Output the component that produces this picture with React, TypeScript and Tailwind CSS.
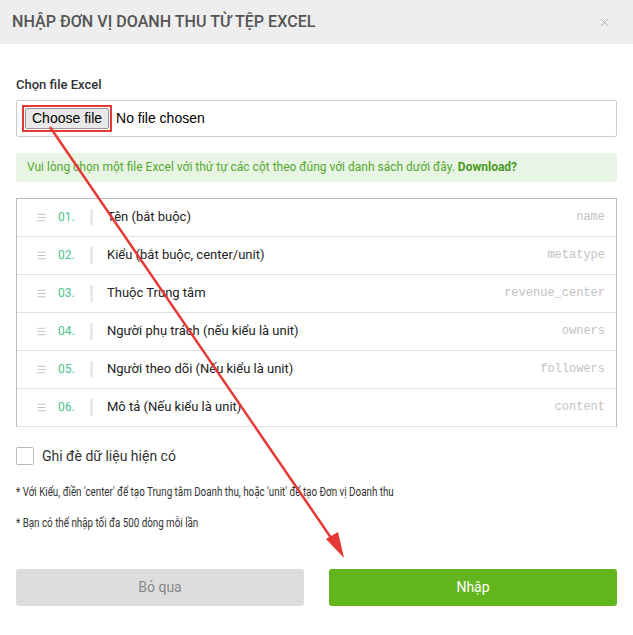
import { Menu, X } from 'lucide-react';

const rows = [
  { no: '01.', label: 'Tên (bắt buộc)', key: 'name' },
  { no: '02.', label: 'Kiểu (bắt buộc, center/unit)', key: 'metatype' },
  { no: '03.', label: 'Thuộc Trung tâm', key: 'revenue_center' },
  { no: '04.', label: 'Người phụ trách (nếu kiểu là unit)', key: 'owners' },
  { no: '05.', label: 'Người theo dõi (Nếu kiểu là unit)', key: 'followers' },
  { no: '06.', label: 'Mô tả (Nếu kiểu là unit)', key: 'content' },
];

export default function App() {
  return (
    <div className="relative w-[633px] h-[635px] overflow-hidden bg-white font-['Roboto',sans-serif] text-[#333]">
      <div className="flex items-center justify-between h-[44px] bg-[#eeeeee] pl-[12px] pr-[22px]">
        <h1 className="text-[16.1px] font-medium text-[#555]">
          NHẬP ĐƠN VỊ DOANH THU TỪ TỆP EXCEL
        </h1>
        <X size={13} strokeWidth={1.5} className="text-[#aaa]" />
      </div>

      <div className="px-[16px] pt-[31px]">
        <div className="text-[13px] font-medium text-[#333] mb-[5px]">Chọn file Excel</div>
        <div className="flex items-center h-[37px] border border-[#ccc] rounded-[2px] pl-[5px]">
          <span className="border-2 border-[#e53935] p-[1px]">
            <span className="block bg-[#e9e9e9] border border-[#999] rounded-[2px] px-[6px] h-[21px] leading-[19px] text-[14px] text-black font-['Liberation_Sans',sans-serif]">
              Choose file
            </span>
          </span>
          <span className="ml-[4px] text-[14px] text-black font-['Liberation_Sans',sans-serif]">
            No file chosen
          </span>
        </div>

        <div className="mt-[16px] h-[29px] flex items-center rounded-[3px] bg-[#e8f5e4] px-[11px] text-[12px] text-[#55a82e]">
          Vui lòng chọn một file Excel với thứ tự các cột theo đúng với danh sách dưới đây.&nbsp;
          <span className="font-bold text-[#4a9a24]">Download?</span>
        </div>

        <div className="mt-[16px] border-t border-x border-[#bbb]">
          {rows.map((r) => (
            <div key={r.no} className="flex items-center h-[38px] border-b border-[#e2e2e2]">
              <Menu size={11} strokeWidth={1.5} className="ml-[19px] text-[#aaa]" />
              <span className="ml-[11px] w-[22px] text-[12px] text-[#4cc38a]">{r.no}</span>
              <span className="ml-[10px] w-[3px] h-[17px] bg-[#eaeaea]" />
              <span className="ml-[14px] flex-1 text-[13px] text-[#222]">{r.label}</span>
              <span className="mr-[11px] text-[12px] text-[#c2c2c2] font-['Liberation_Mono',monospace]">
                {r.key}
              </span>
            </div>
          ))}
        </div>

        <label className="flex items-center mt-[19px] gap-[8px]">
          <span className="w-[18px] h-[18px] border border-[#bbb] rounded-[2px]" />
          <span className="text-[14px] text-[#333]">Ghi đè dữ liệu hiện có</span>
        </label>

        <div className="text-[12.5px] text-[#333] origin-left scale-x-[0.785] w-[760px]">
          <p className="mt-[16px]">
            * Với Kiểu, điền 'center' để tạo Trung tâm Doanh thu, hoặc 'unit' để tạo Đơn vị Doanh thu
          </p>
          <p className="mt-[13px]">* Bạn có thể nhập tối đa 500 dòng mỗi lần</p>
        </div>

        <div className="mt-[36px] grid grid-cols-2 gap-[25px]">
          <button className="h-[37px] rounded-[3px] bg-[#dddddd] text-[14px] text-[#888]">Bỏ qua</button>
          <button className="h-[37px] rounded-[3px] bg-[#62b51c] text-[14px] text-white">Nhập</button>
        </div>
      </div>

      <svg className="absolute left-0 top-0 pointer-events-none" width="633" height="635">
        <line x1="50" y1="127" x2="338" y2="548" stroke="#e53935" strokeWidth="2.5" />
        <polygon points="344,558 326,539 338,532" fill="#e53935" />
      </svg>
    </div>
  );
}
